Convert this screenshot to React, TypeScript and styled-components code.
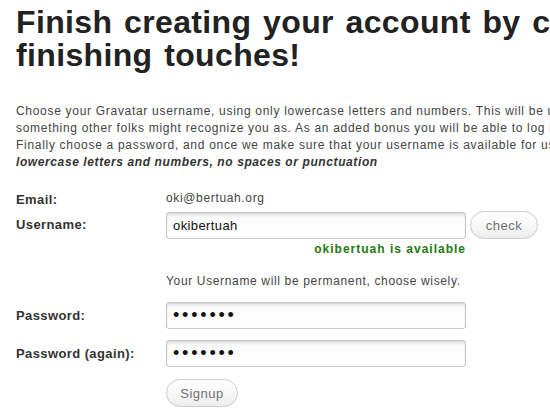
import { FC } from 'react';
import styled, { createGlobalStyle } from 'styled-components';

const GlobalStyle = createGlobalStyle`
  html, body {
    margin: 0;
    padding: 0;
    background: #fff;
    overflow: hidden;
  }
  body {
    font-family: 'Liberation Sans', Arial, sans-serif;
  }
`;

const Page = styled.div`
  width: 800px;
  padding: 6px 16px;
`;

const Title = styled.h1`
  font-size: 32px;
  line-height: 33px;
  font-weight: bold;
  letter-spacing: 0.35px;
  word-spacing: 2.5px;
  color: #222;
  margin: 0 0 31px;
  white-space: nowrap;
`;

const Intro = styled.p`
  font-size: 12px;
  line-height: 17px;
  letter-spacing: 0.7px;
  color: #444;
  margin: 0 0 17px;
  white-space: nowrap;
`;

const Hint = styled.em`
  font-weight: bold;
  letter-spacing: 0.6px;
  color: #333;
`;

const Form = styled.div`
  display: flex;
  flex-direction: column;
`;

const Row = styled.div<{ $top: number }>`
  display: flex;
  align-items: center;
  margin-top: ${(p) => p.$top}px;
`;

const Label = styled.label<{ $pad?: number }>`
  width: 150px;
  flex: none;
  align-self: ${(p) => (p.$pad ? 'flex-start' : 'center')};
  padding-top: ${(p) => p.$pad ?? 0}px;
  font-size: 13px;
  line-height: 16px;
  font-weight: bold;
  letter-spacing: 0.4px;
  color: #333;
`;

const Value = styled.div`
  font-size: 12px;
  line-height: 16px;
  letter-spacing: 0.65px;
  color: #444;
`;

const Indented = styled.div<{ $top: number; $right?: boolean }>`
  width: 300px;
  margin: ${(p) => p.$top}px 0 0 150px;
  text-align: ${(p) => (p.$right ? 'right' : 'left')};
`;

const Available = styled.span`
  font-size: 12px;
  line-height: 14px;
  font-weight: bold;
  letter-spacing: 1px;
  color: #217a10;
`;

const Note = styled.span`
  font-size: 12px;
  line-height: 16px;
  letter-spacing: 0.65px;
  color: #444;
`;

const Input = styled.input<{ $secret?: boolean }>`
  width: 300px;
  height: 27px;
  box-sizing: border-box;
  border: 1px solid #c8c8c8;
  border-radius: 3px;
  padding: 0 6px;
  font-family: 'Liberation Sans', Arial, sans-serif;
  font-size: ${(p) => (p.$secret ? 18 : 13)}px;
  letter-spacing: ${(p) => (p.$secret ? 2.8 : 0.4)}px;
  color: #111;
  background: linear-gradient(#e9e9e9, #fbfbfb 5px, #fff);
  box-shadow: inset 0 1px 2px rgba(0, 0, 0, 0.1);
  outline: none;
`;

const Pill = styled.button<{ $w: number; $gap?: number }>`
  width: ${(p) => p.$w}px;
  height: 28px;
  margin-left: ${(p) => p.$gap ?? 0}px;
  border: 1px solid #cdcdcd;
  border-radius: 14px;
  background: linear-gradient(#fff, #f6f6f6 60%, #ececec);
  font-family: 'Liberation Sans', Arial, sans-serif;
  font-size: 13px;
  letter-spacing: 0.5px;
  color: #707070;
  padding: 0;
`;

const App: FC = () => (
  <Page>
    <GlobalStyle />
    <Title>
      Finish creating your account by choosing the
      <br />
      finishing touches!
    </Title>
    <Intro>
      Choose your Gravatar username, using only lowercase letters and numbers. This will be used in your profile URL, so pick
      <br />
      something other folks might recognize you as. As an added bonus you will be able to log in with it.
      <br />
      Finally choose a password, and once we make sure that your username is available for use, you are done!
      <br />
      <Hint>lowercase letters and numbers, no spaces or punctuation</Hint>
    </Intro>
    <Form>
      <Row $top={0}>
        <Label $pad={4}>Email:</Label>
        <Value>oki@bertuah.org</Value>
      </Row>
      <Row $top={3}>
        <Label>Username:</Label>
        <Input defaultValue="okibertuah" />
        <Pill $w={68} $gap={4}>check</Pill>
      </Row>
      <Indented $top={0} $right>
        <Available>okibertuah is available</Available>
      </Indented>
      <Indented $top={14}>
        <Note>Your Username will be permanent, choose wisely.</Note>
      </Indented>
      <Row $top={13}>
        <Label>Password:</Label>
        <Input type="password" $secret defaultValue="secret1" />
      </Row>
      <Row $top={11}>
        <Label>Password (again):</Label>
        <Input type="password" $secret defaultValue="secret1" />
      </Row>
      <Row $top={12}>
        <Indented $top={0}>
          <Pill $w={72}>Signup</Pill>
        </Indented>
      </Row>
    </Form>
  </Page>
);

export default App;
